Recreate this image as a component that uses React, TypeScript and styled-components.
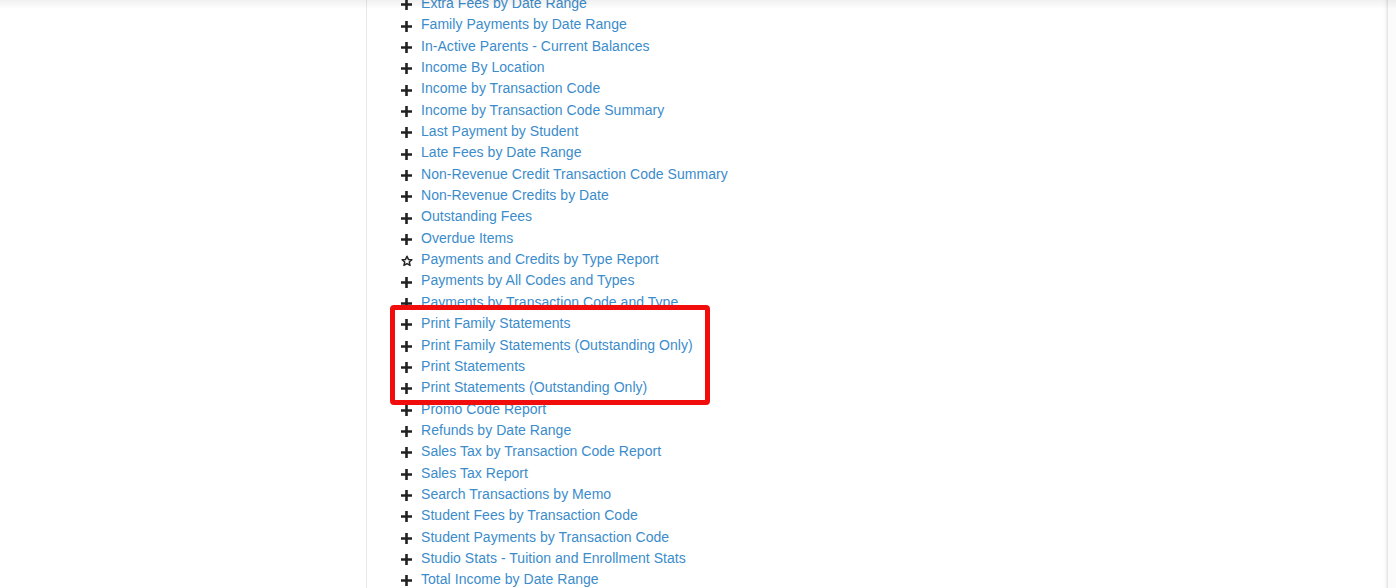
import React from 'react';
import styled, { createGlobalStyle } from 'styled-components';

const GlobalStyle = createGlobalStyle`
  html, body {
    margin: 0;
    padding: 0;
    background: #fff;
    overflow: hidden;
  }
  body {
    font-family: "Liberation Sans", Arial, Helvetica, sans-serif;
    font-size: 14px;
    color: #333;
  }
`;

type Report = { name: string; starred?: boolean };

const before: Report[] = [
  { name: 'Extra Fees by Date Range' },
  { name: 'Family Payments by Date Range' },
  { name: 'In-Active Parents - Current Balances' },
  { name: 'Income By Location' },
  { name: 'Income by Transaction Code' },
  { name: 'Income by Transaction Code Summary' },
  { name: 'Last Payment by Student' },
  { name: 'Late Fees by Date Range' },
  { name: 'Non-Revenue Credit Transaction Code Summary' },
  { name: 'Non-Revenue Credits by Date' },
  { name: 'Outstanding Fees' },
  { name: 'Overdue Items' },
  { name: 'Payments and Credits by Type Report', starred: true },
  { name: 'Payments by All Codes and Types' },
  { name: 'Payments by Transaction Code and Type' },
];

const highlighted: Report[] = [
  { name: 'Print Family Statements' },
  { name: 'Print Family Statements (Outstanding Only)' },
  { name: 'Print Statements' },
  { name: 'Print Statements (Outstanding Only)' },
];

const after: Report[] = [
  { name: 'Promo Code Report' },
  { name: 'Refunds by Date Range' },
  { name: 'Sales Tax by Transaction Code Report' },
  { name: 'Sales Tax Report' },
  { name: 'Search Transactions by Memo' },
  { name: 'Student Fees by Transaction Code' },
  { name: 'Student Payments by Transaction Code' },
  { name: 'Studio Stats - Tuition and Enrollment Stats' },
  { name: 'Total Income by Date Range' },
];

const Page = styled.div`
  display: grid;
  grid-template-columns: 366px 1fr 9px;
  min-height: 588px;
`;

const Gutter = styled.div`
  background: #fff;
`;

const RightGutter = styled.div`
  background: #fbfbfb;
  border-left: 1px solid #e6e6e6;
`;

const Card = styled.div`
  background: #fff;
  border-left: 1px solid #e8e8e8;
  border-right: 1px solid #f0f0f0;
  box-shadow: inset -3px 0 4px -3px rgba(0, 0, 0, 0.06);
  padding: 0 0 0 34px;
`;

const TopShade = styled.div`
  position: fixed;
  top: 0;
  left: 0;
  right: 0;
  height: 9px;
  background: linear-gradient(to bottom, rgba(0, 0, 0, 0.06), rgba(0, 0, 0, 0));
  pointer-events: none;
`;

const List = styled.ul`
  list-style: none;
  margin: -7px 0 0;
  padding: 0;
`;

const Group = styled.li`
  position: relative;
  &::after {
    content: '';
    position: absolute;
    left: -11px;
    top: -8px;
    width: 310px;
    height: 90px;
    border: 5px solid #f20d0d;
    border-radius: 4px;
    pointer-events: none;
  }
`;

const Inner = styled.ul`
  list-style: none;
  margin: 0;
  padding: 0;
`;

const Item = styled.li`
  display: flex;
  align-items: center;
  height: 21.35px;
  line-height: 21.35px;
`;

const IconBox = styled.span`
  display: inline-flex;
  width: 20px;
  justify-content: flex-start;
  align-items: center;
  padding-top: 2px;
  color: #222;
`;

const Link = styled.a`
  color: #3b8ccb;
  text-decoration: none;
  white-space: nowrap;
  letter-spacing: 0.04px;
`;

const Plus = () => (
  <svg width="11" height="11" viewBox="0 0 11 11">
    <path d="M4.2 0h2.6v4.2H11v2.6H6.8V11H4.2V6.8H0V4.2h4.2z" fill="currentColor" />
  </svg>
);

const Star = () => (
  <svg width="12" height="12" viewBox="0 0 24 24">
    <path
      d="M12 2.5l2.9 6.3 6.8.7-5.1 4.6 1.5 6.7L12 17.4l-6.1 3.4 1.5-6.7-5.1-4.6 6.8-.7z"
      fill="none"
      stroke="currentColor"
      strokeWidth="3"
      strokeLinejoin="round"
    />
  </svg>
);

const ReportRow = ({ report }: { report: Report }) => (
  <Item>
    <IconBox>{report.starred ? <Star /> : <Plus />}</IconBox>
    <Link href="#">{report.name}</Link>
  </Item>
);

export default function App() {
  return (
    <>
      <GlobalStyle />
      <Page>
        <Gutter />
        <Card>
          <List>
            {before.map((r) => (
              <ReportRow key={r.name} report={r} />
            ))}
            <Group>
              <Inner>
                {highlighted.map((r) => (
                  <ReportRow key={r.name} report={r} />
                ))}
              </Inner>
            </Group>
            {after.map((r) => (
              <ReportRow key={r.name} report={r} />
            ))}
          </List>
        </Card>
        <RightGutter />
      </Page>
      <TopShade />
    </>
  );
}
